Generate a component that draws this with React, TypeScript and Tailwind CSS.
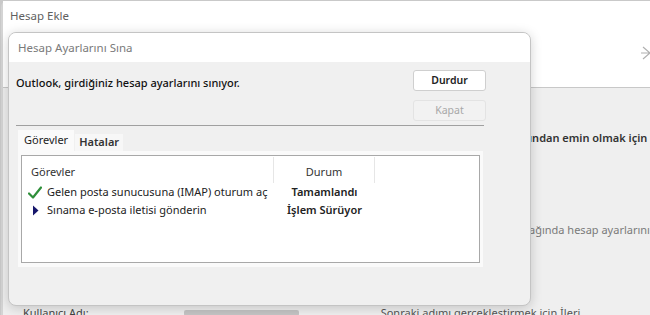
import React from "react";

function Check() {
  return (
    <svg width="14" height="13" viewBox="0 0 14 13" className="shrink-0">
      <path d="M1 7.5 L5 11.5 L13 1.5" fill="none" stroke="#2f8f3a" strokeWidth="2.2" strokeLinecap="round" strokeLinejoin="round" />
    </svg>
  );
}

function Arrow() {
  return (
    <svg width="14" height="11" viewBox="0 0 14 11" className="shrink-0">
      <path d="M5 0.5 L10.5 5.5 L5 10.5 Z" fill="#16166b" />
    </svg>
  );
}

export default function App() {
  const font = { fontFamily: '"Noto Sans", "Open Sans", Arial, sans-serif' };
  return (
    <div className="relative w-[650px] h-[315px] overflow-hidden bg-[#c9c9c9]" style={font}>
      {/* background window */}
      <div className="absolute left-[1px] top-[1px] right-0 bottom-0 flex flex-col rounded-tl-[6px] bg-white border-l-[2px] border-[#d4d4d4]">
        <div className="relative h-[87px] shrink-0 bg-white border-b border-[#c8c8c8]">
          <div className="pl-[7px] pt-[7px] text-[11.5px] leading-[16px] text-[#5f5f5f]">Hesap Ekle</div>
          <svg className="absolute right-0 top-[44px]" width="9" height="16" viewBox="0 0 9 16">
            <path d="M2 2 L9 8 M2 14 L9 8 M0 8 L9 8" stroke="#b0b0b0" strokeWidth="1.2" fill="none" />
          </svg>
        </div>
        <div className="flex-1 flex flex-col bg-[#efefef] text-[11px]">
          <div className="pl-[526px] pt-[42px] leading-[16px] whitespace-nowrap font-semibold text-[#333]">ından emin olmak için</div>
          <div className="pl-[526px] pt-[76px] leading-[16px] whitespace-nowrap text-[#7a7a7a]">ağında hesap ayarlarını</div>
          <div className="flex items-start pt-[67px] pl-[20px] whitespace-nowrap">
            <span className="text-[#444] leading-[16px]">Kullanıcı Adı:</span>
            <span className="ml-[95px] mt-[5px] w-[115px] h-[6px] bg-[#c4c4c4] rounded-[2px]" />
            <span className="ml-[82px] text-[#555] leading-[16px]">Sonraki adımı gerçekleştirmek için İleri</span>
          </div>
        </div>
      </div>

      {/* dialog */}
      <div className="absolute left-[8px] top-[32px] w-[523px] h-[274px] flex flex-col rounded-[8px] border border-[#c4c4c4] bg-[#f0f0f0] shadow-[0_2px_12px_rgba(0,0,0,0.18)] overflow-hidden">
        <div className="h-[29px] shrink-0 bg-white flex items-center pl-[9px] text-[11.5px] text-[#7a7a7a]">
          Hesap Ayarlarını Sına
        </div>
        <div className="flex-1 flex flex-col pl-[7px] pr-[44px] pt-[8px]">
          <div className="flex items-start">
            <div className="flex-1 pt-[5px] text-[11px] leading-[16px] text-[#111] font-medium">
              Outlook, girdiğiniz hesap ayarlarını sınıyor.
            </div>
            <div className="flex flex-col gap-[9px] w-[73px]">
              <button className="h-[21px] rounded-[3px] border border-[#cfcfcf] bg-white text-[10.5px] font-semibold text-[#222]">Durdur</button>
              <button className="h-[21px] rounded-[3px] border border-[#e3e3e3] bg-[#f2f2f2] text-[10.5px] text-[#a8a8a8]">Kapat</button>
            </div>
          </div>
          <div className="mt-[4px] mr-[2px] h-[2px] border-t border-[#a0a0a0] border-b-white" />
          <div className="mt-[3px] flex items-end h-[21px] pl-[2px]">
            <div className="h-[21px] px-[6px] flex items-center bg-[#fafafa] text-[11px] text-[#222]">Görevler</div>
            <div className="ml-[1px] h-[17px] px-[4px] flex items-center bg-[#f7f7f7] text-[11px] font-semibold text-[#333]">Hatalar</div>
          </div>
          <div className="ml-[2px] mr-[3px] h-[116px] bg-[#fafafa] pt-[4px] px-[3px]">
            <div className="h-[108px] bg-white border border-[#a8a8a8] text-[11px] leading-[18px] text-[#222]">
              <div className="flex h-[27px] pt-[1px]">
                <div className="w-[252px] pl-[9px] pt-[6px] border-r border-[#e6e6e6] text-[#333]">Görevler</div>
                <div className="w-[101px] text-center pt-[6px] border-r border-[#e6e6e6] text-[#333]">Durum</div>
              </div>
              <div className="flex items-center h-[18px]">
                <div className="w-[252px] pl-[6px] flex items-center gap-[5px] whitespace-nowrap">
                  <Check />
                  <span>Gelen posta sunucusuna (IMAP) oturum aç</span>
                </div>
                <div className="w-[101px] text-center font-semibold">Tamamlandı</div>
              </div>
              <div className="flex items-center h-[18px]">
                <div className="w-[252px] pl-[6px] flex items-center gap-[5px] whitespace-nowrap">
                  <Arrow />
                  <span>Sınama e-posta iletisi gönderin</span>
                </div>
                <div className="w-[101px] text-center font-semibold">İşlem Sürüyor</div>
              </div>
            </div>
          </div>
        </div>
      </div>
    </div>
  );
}
